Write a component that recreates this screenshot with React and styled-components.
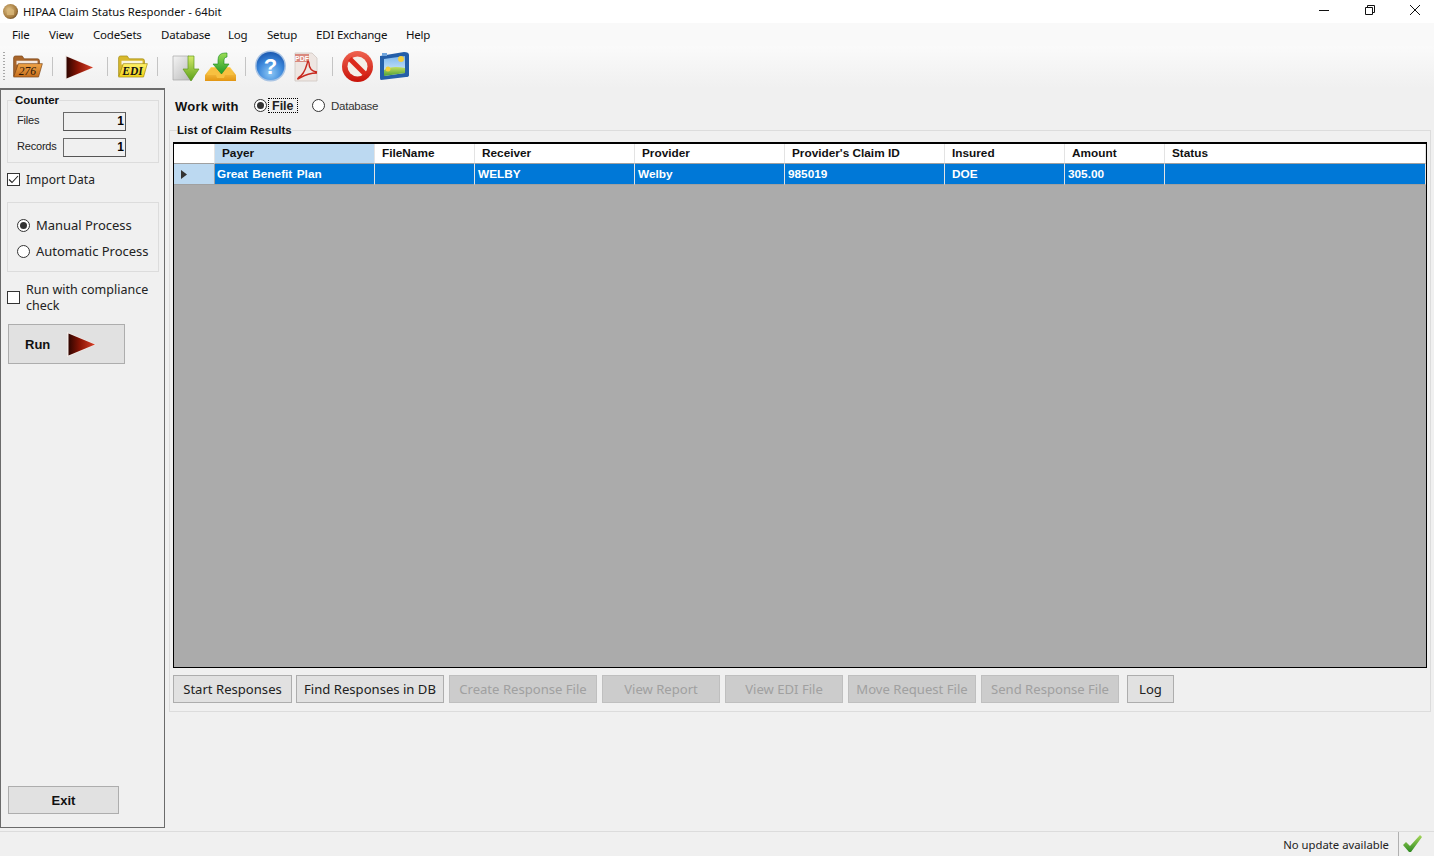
import React from "react";
import styled, { createGlobalStyle } from "styled-components";

const Global = createGlobalStyle`
  html, body { margin: 0; padding: 0; background: #f0f0f0; overflow: hidden; }
  * { box-sizing: border-box; }
`;

const UI = `"Noto Sans", "Open Sans", sans-serif`;
const MS = `"Liberation Sans", Arial, sans-serif`;

const Window = styled.div`
  width: 1434px; height: 856px; display: flex; flex-direction: column; overflow: hidden;
  background: #f0f0f0; color: #000; font-family: ${UI}; font-size: 12px;
`;
const TitleBar = styled.header`
  height: 23px; background: #fff; display: flex; align-items: center; padding-left: 3px;
`;
const TitleText = styled.span`
  margin-left: 5px; font-size: 11.3px; color: #111; white-space: nowrap;
`;
const WinControls = styled.div`
  margin-left: auto; margin-right: -4px; display: flex; align-items: center; height: 23px;
`;
const WinBtn = styled.div`
  width: 45.5px; height: 23px; display: flex; align-items: center; justify-content: center;
  svg { display: block; margin-top: -3px; }
`;
const MenuBar = styled.nav`
  height: 23px; background: #f9f9f9; display: flex; align-items: center; padding-left: 12px;
`;
const MenuItem = styled.span`
  font-size: 11.5px; letter-spacing: -0.2px; color: #111; white-space: nowrap; width: ${p => p.$w}px; margin-top: -1px;
`;
const ToolBar = styled.div`
  height: 42px; display: flex; align-items: flex-start; padding-left: 3px;
  background: linear-gradient(#fafafa, #f0f0f0);
`;
const Grip = styled.div`
  width: 2px; height: 29px; margin-top: 6px;
  background: repeating-linear-gradient(#a8a8a8 0 1px, transparent 1px 3px);
`;
const Tool = styled.div`
  margin-left: ${p => p.$ml}px; margin-top: ${p => p.$mt}px;
  svg { display: block; }
`;
const ToolSep = styled.div`
  width: 1px; height: 19px; background: #c4c4c4; margin-left: ${p => p.$ml}px; margin-top: 11px;
`;
const Body = styled.div`
  flex: 1; display: flex; align-items: flex-start; min-height: 0;
`;
const Sidebar = styled.aside`
  width: 165px; height: 740px; border: 1px solid #6b6b6b; border-top-width: 2px;
  display: flex; flex-direction: column; padding: 3px 0 13px 6px; flex: none;
`;
const Group = styled.fieldset`
  margin: 0; padding: 0; border: 1px solid #dcdcdc; width: 152px; min-width: 0;
`;
const CounterGroup = styled(Group)`
  height: 70px; padding: 0 0 0 9px;
`;
const SmallLegend = styled.legend`
  font-family: ${MS}; font-weight: 700; font-size: 11.5px; padding: 0; margin-left: -2px;
  line-height: 14px; color: #111;
`;
const CounterRow = styled.div`
  display: flex; align-items: center; height: 19px; margin-top: ${p => p.$mt}px;
`;
const CounterLabel = styled.span`
  width: 46px; font-family: ${MS}; font-size: 11px; letter-spacing: -0.2px; color: #222; margin-top: -4px;
`;
const CounterBox = styled.div`
  width: 63px; height: 19px; border: 1px solid #6a6a6a; border-color: #6a6a6a #555 #555 #6a6a6a;
  background: #f0f0f0; text-align: right; font-family: ${MS}; font-weight: 700; font-size: 12px;
  line-height: 17px; padding-right: 1px;
`;
const CheckRow = styled.label`
  display: flex; align-items: center; margin-top: ${p => p.$mt}px; height: ${p => p.$h}px;
`;
const Box = styled.span`
  width: 13px; height: 13px; border: 1px solid #333; background: #fff; flex: none;
  display: flex; align-items: center; justify-content: center; margin-right: 6px;
`;
const CheckText = styled.span`
  font-size: ${p => p.$size}px; color: #222; line-height: 16px; margin-top: 2px;
`;
const ProcessGroup = styled(Group)`
  height: 70px; margin-top: 15px; padding: 14px 0 0 9px; display: flex; flex-direction: column; gap: 10px;
`;
const RadioRow = styled.label`
  display: flex; align-items: center; height: 16px;
`;
const Radio = styled.span`
  width: 13px; height: 13px; border-radius: 50%; border: 1px solid #333; background: #fff; flex: none;
  display: flex; align-items: center; justify-content: center;
  margin-right: ${p => p.$mr}px; margin-left: ${p => p.$ml || 0}px;
  &::after { content: ""; width: 7px; height: 7px; border-radius: 50%; background: ${p => p.$on ? "#333" : "transparent"}; }
`;
const RadioText = styled.span`
  font-size: 13px; color: #222; white-space: nowrap; letter-spacing: -.03px;
`;
const RunButton = styled.button`
  width: 117px; height: 40px; margin: 11px 0 0 1px; padding: 0 0 0 16px; background: #e1e1e1;
  border: 1px solid #adadad; display: flex; align-items: center; font-family: ${MS}; font-weight: 700;
  font-size: 13px; color: #111;
  svg { margin-left: 17px; display: block; }
`;
const ExitButton = styled.button`
  width: 111px; height: 28px; margin: auto 0 0 1px; background: #e1e1e1; border: 1px solid #adadad;
  font-family: ${MS}; font-weight: 700; font-size: 13px; color: #111; padding: 0;
`;
const Main = styled.main`
  flex: 1; padding: 2px 3px 0 4px; min-width: 0;
`;
const WorkRow = styled.div`
  height: 33px; display: flex; align-items: center; padding: 0 0 2px 6px;
`;
const WorkLabel = styled.span`
  font-family: ${MS}; font-weight: 700; font-size: 13px; width: 79px; color: #111; letter-spacing: .2px; margin-top: 1px;
`;
const FocusLabel = styled.span`
  font-family: ${MS}; font-size: 12.5px; font-weight: 700; color: #222; border: 1px dotted #000;
  height: 15px; width: 30px; line-height: 14px; padding-left: 3px; margin-left: -3px;
`;
const DbLabel = styled.span`
  font-family: ${MS}; font-size: 11.5px; color: #333; letter-spacing: -.25px;
`;
const ResultGroup = styled.fieldset`
  margin: 0; border: 1px solid #dcdcdc; padding: 5px 3px 8px 3px; height: 589px; min-width: 0;
  display: flex; flex-direction: column;
`;
const ResultLegend = styled.legend`
  font-family: ${MS}; font-weight: 700; font-size: 11.5px; line-height: 14px; margin-left: 4px; padding: 0;
  color: #111; letter-spacing: .05px;
`;
const DataGrid = styled.div`
  height: 526px; background: #ababab; border: 1px solid #000; border-width: 2px 1px 1px 1px; flex: none;
`;
const Row = styled.div`
  display: grid; grid-template-columns: 41px 160px 100px 160px 150px 160px 120px 100px 1fr;
  height: ${p => p.$h}px; background: ${p => p.$bg}; font-family: ${MS}; font-weight: 700; font-size: 11.8px;
`;
const HeadCell = styled.div`
  border-right: 1px solid #e3e3e3; border-bottom: 1px solid #a0a0a0;
  background: ${p => p.$sel ? "#bcd9f1" : "#fff"}; line-height: 19px; padding-left: 7px; color: #111; white-space: nowrap;
`;
const Cell = styled.div`
  border-right: 1px solid #e3e3e3; border-bottom: 1px solid #a0a0a0; color: #fff; line-height: 20px;
  padding-left: ${p => p.$pad}px; white-space: nowrap; word-spacing: 1.2px;
`;
const RowHeader = styled.div`
  background: #bcd9f1; border-right: 1px solid #a0a0a0; border-bottom: 1px solid #a0a0a0; display: flex; align-items: center; padding-left: 7px;
`;
const Actions = styled.div`
  display: flex; margin-top: 7px; flex: none;
`;
const ActionButton = styled.button`
  width: ${p => p.$w}px; height: 28px; margin-left: ${p => p.$ml}px; padding: 0; white-space: nowrap;
  font-family: ${UI}; font-size: 13.1px;
  background: ${p => p.disabled ? "#cccccc" : "#e1e1e1"};
  border: 1px solid ${p => p.disabled ? "#bfbfbf" : "#adadad"};
  color: ${p => p.disabled ? "#a0a0a0" : "#222"};
`;
const StatusBar = styled.footer`
  height: 25px; margin-top: auto; border-top: 1px solid #dcdcdc; display: flex; justify-content: flex-end; align-items: center;
  padding-right: 12px; flex: none;
`;
const StatusText = styled.span`
  font-size: 11.3px; color: #222; margin-right: 9px;
`;
const StatusSep = styled.div`
  width: 1px; height: 24px; background: #b0b0b0; margin-right: 4px;
`;

const AppIcon = () => (
  <svg width="15" height="15" viewBox="0 0 15 15">
    <defs><radialGradient id="ai" cx=".4" cy=".4" r=".7"><stop offset="0" stopColor="#e2c58c"/><stop offset=".7" stopColor="#a67c3f"/><stop offset="1" stopColor="#5c4020"/></radialGradient></defs>
    <circle cx="7.5" cy="7.5" r="7.5" fill="url(#ai)"/>
    <path d="M4 6q3.5-3 7 0v5H4z" fill="#d8b678" opacity=".8"/>
  </svg>
);

const Folder = ({ id, back, mid, front, label, stroke, color }) => (
  <svg width="31" height="23" viewBox="0 0 31 24">
    <defs><linearGradient id={id} x1="0" y1="0" x2="0" y2="1"><stop offset="0" stopColor={mid}/><stop offset="1" stopColor={front}/></linearGradient></defs>
    <path d="M1 22V3q0-2 2-2h7l2 3h14q2 0 2 2v3H6L3 22z" fill={back} stroke={stroke} strokeWidth=".7"/>
    <path d="M4 6h22v4H4z" fill="#fff" opacity=".85"/>
    <path d="M6 9h25l-4 14H1z" fill={`url(#${id})`} stroke={stroke} strokeWidth=".7"/>
    <text x="15.5" y="21" textAnchor="middle" fontFamily="Liberation Serif, serif" fontStyle="italic" fontWeight={label === "EDI" ? 700 : 400} fontSize="12" fill={color}>{label}</text>
  </svg>
);

const PlayArrow = ({ id }) => (
  <svg width="29" height="25" viewBox="0 0 29 25">
    <defs><linearGradient id={id} x1="0" y1="0" x2="1" y2="0"><stop offset="0" stopColor="#2e0500"/><stop offset=".45" stopColor="#8c1505"/><stop offset="1" stopColor="#d8412a"/></linearGradient></defs>
    <path d="M0 0l29 12.5L0 25z" fill="#f4ece9"/>
    <path d="M1.5 1.5L28 12.5 1.5 23.500z" fill={`url(#${id})`}/>
  </svg>
);

const PageDown = () => (
  <svg width="28" height="27" viewBox="0 0 28 27">
    <defs><linearGradient id="pg" x1="0" y1="0" x2="1" y2="1"><stop offset="0" stopColor="#f4f4f4"/><stop offset="1" stopColor="#b8b8b8"/></linearGradient>
    <linearGradient id="ga" x1="0" y1="0" x2="0" y2="1"><stop offset="0" stopColor="#d4ea6a"/><stop offset="1" stopColor="#5aa018"/></linearGradient></defs>
    <path d="M1 1h16l3 3v21H1z" fill="url(#pg)" stroke="#a8a8a8" strokeWidth=".7"/>
    <path d="M16 1h6v13h5L19 26 11 14h5z" fill="url(#ga)" stroke="#5e9a20" strokeWidth=".7"/>
  </svg>
);

const InboxIn = () => (
  <svg width="31" height="30" viewBox="0 0 31 30">
    <defs><linearGradient id="ib" x1="0" y1="0" x2="0" y2="1"><stop offset="0" stopColor="#ffd763"/><stop offset="1" stopColor="#e29512"/></linearGradient>
    <linearGradient id="gb" x1="0" y1="0" x2="0" y2="1"><stop offset="0" stopColor="#9cdc54"/><stop offset="1" stopColor="#1f9a28"/></linearGradient></defs>
    <path d="M6 15h19l6 8v6H0v-6z" fill="url(#ib)"/>
    <path d="M6 16h19l4 7H20l-1 3h-7l-1-3H2z" fill="#f7c040"/>
    <path d="M20 1q-7 0-7 7v4H8l8.5 10L24 12h-5V8q0-3 3-3V1z" fill="url(#gb)" stroke="#178a20" strokeWidth=".6"/>
  </svg>
);

const Help = () => (
  <svg width="31" height="32" viewBox="0 0 31 32">
    <defs><radialGradient id="hp" cx=".5" cy=".75" r=".75"><stop offset="0" stopColor="#8dc8f5"/><stop offset=".6" stopColor="#3a86da"/><stop offset="1" stopColor="#1b58b0"/></radialGradient></defs>
    <circle cx="15.5" cy="16" r="15.5" fill="#a9c4e4"/>
    <circle cx="15.5" cy="16" r="14" fill="url(#hp)"/>
    <text x="15.5" y="24" textAnchor="middle" fontFamily="Liberation Sans, sans-serif" fontWeight="700" fontSize="22" fill="#fff">?</text>
  </svg>
);

const Pdf = () => (
  <svg width="24" height="30" viewBox="0 0 24 30">
    <path d="M1 1h17l5 5v23H1z" fill="#eee6e2" stroke="#cfc7c2" strokeWidth=".8"/>
    <rect x="1" y="2" width="14" height="8" fill="#d9897f"/>
    <text x="8" y="9" textAnchor="middle" fontFamily="Liberation Sans, sans-serif" fontWeight="700" fontSize="7" fill="#fff">PDF</text>
    <path d="M4 26q6-3 9-14 1-5 2-1 0 8 8 9M4 26q-1 2 2 0 8-5 17-5" fill="none" stroke="#c8281e" strokeWidth="1.4"/>
  </svg>
);

const Stop = () => (
  <svg width="31" height="31" viewBox="0 0 31 31">
    <defs><linearGradient id="st" x1="0" y1="0" x2="0" y2="1"><stop offset="0" stopColor="#ef6350"/><stop offset="1" stopColor="#c81208"/></linearGradient></defs>
    <circle cx="15.5" cy="15.5" r="15.5" fill="url(#st)"/>
    <circle cx="15.5" cy="15.5" r="10" fill="#f4efe8"/>
    <path d="M6 9.5L21.5 25 25 21.5 9.5 6z" fill="#dc2a1c"/>
  </svg>
);

const Picture = () => (
  <svg width="31" height="30" viewBox="0 0 31 30">
    <defs><linearGradient id="sk" x1="0" y1="0" x2="0" y2="1"><stop offset="0" stopColor="#7eb8ee"/><stop offset="1" stopColor="#dff0fb"/></linearGradient>
    <linearGradient id="gr" x1="0" y1="0" x2="0" y2="1"><stop offset="0" stopColor="#c4e060"/><stop offset="1" stopColor="#4ea038"/></linearGradient></defs>
    <path d="M1 5l24-4q5 0 5 3v20q0 2-3 2L2 29q-1 0-1-2z" fill="#245ea8"/>
    <path d="M5 8l21-3v17L5 25z" fill="url(#sk)"/>
    <path d="M5 19q8-5 21-2v5L5 25z" fill="url(#gr)"/>
    <circle cx="22" cy="8" r="3" fill="#f4cf3c"/>
    <circle cx="9" cy="18" r="2.5" fill="#f4cf3c"/>
    <rect x="3" y="2" width="5" height="3" fill="#6fa4dc"/>
  </svg>
);

const CheckMark = () => (
  <svg width="19" height="18" viewBox="0 0 19 18">
    <defs><linearGradient id="ck" x1="0" y1="0" x2="0" y2="1"><stop offset="0" stopColor="#a6d85a"/><stop offset="1" stopColor="#2f8a22"/></linearGradient></defs>
    <path d="M0 10l3-3 4 4L17 0l2 2L8 17H6z" fill="url(#ck)"/>
  </svg>
);

const Arrow = () => (
  <svg width="7" height="9" viewBox="0 0 7 9"><path d="M0 0l6 4.5L0 9z" fill="#333"/></svg>
);

const columns = ["Payer", "FileName", "Receiver", "Provider", "Provider's Claim ID", "Insured", "Amount", "Status"];
const values = [["Great Benefit Plan", 2], ["", 3], ["WELBY", 3], ["Welby", 3], ["985019", 3], ["DOE", 7], ["305.00", 3], ["", 3]];
const menus = [["File", 37], ["View", 44], ["CodeSets", 68], ["Database", 67], ["Log", 39], ["Setup", 49], ["EDI Exchange", 90], ["Help", 30]];
const actions = [
  ["Start Responses", 119, 0, false], ["Find Responses in DB", 148, 4, false], ["Create Response File", 148, 5, true],
  ["View Report", 118, 5, true], ["View EDI File", 118, 5, true], ["Move Request File", 128, 5, true],
  ["Send Response File", 138, 5, true], ["Log", 47, 8, false],
];

export default function App() {
  return (
    <Window>
      <Global />
      <TitleBar>
        <AppIcon />
        <TitleText>HIPAA Claim Status Responder - 64bit</TitleText>
        <WinControls>
          <WinBtn><svg width="10" height="10" viewBox="0 0 10 10"><path d="M0 5.5h10" stroke="#111"/></svg></WinBtn>
          <WinBtn><svg width="10" height="10" viewBox="0 0 10 10" fill="none" stroke="#111"><path d="M.5 2.5h7v7h-7zM2.5 2.5v-2h7v7h-2"/></svg></WinBtn>
          <WinBtn><svg width="10" height="10" viewBox="0 0 10 10" stroke="#111"><path d="M0 0l10 10M10 0L0 10"/></svg></WinBtn>
        </WinControls>
      </TitleBar>
      <MenuBar>
        {menus.map(([m, w]) => <MenuItem key={m} $w={w}>{m}</MenuItem>)}
      </MenuBar>
      <ToolBar>
        <Grip />
        <Tool $ml={7} $mt={9}><Folder id="f1" back="#a8652a" mid="#f0a548" front="#c56d1c" stroke="#7a4416" label="276" color="#2a1608" /></Tool>
        <ToolSep $ml={9} />
        <Tool $ml={12} $mt={9}><PlayArrow id="p1" /></Tool>
        <ToolSep $ml={13} />
        <Tool $ml={9} $mt={9}><Folder id="f2" back="#d8b82c" mid="#fff26a" front="#f0d018" stroke="#a08a10" label="EDI" color="#111" /></Tool>
        <ToolSep $ml={9} />
        <Tool $ml={14} $mt={9}><PageDown /></Tool>
        <Tool $ml={5} $mt={6}><InboxIn /></Tool>
        <ToolSep $ml={9} />
        <Tool $ml={9} $mt={4}><Help /></Tool>
        <Tool $ml={8} $mt={6}><Pdf /></Tool>
        <ToolSep $ml={14} />
        <Tool $ml={9} $mt={5}><Stop /></Tool>
        <Tool $ml={6} $mt={5}><Picture /></Tool>
      </ToolBar>
      <Body>
        <Sidebar>
          <CounterGroup>
            <SmallLegend>Counter</SmallLegend>
            <CounterRow $mt={5}><CounterLabel>Files</CounterLabel><CounterBox>1</CounterBox></CounterRow>
            <CounterRow $mt={7}><CounterLabel>Records</CounterLabel><CounterBox>1</CounterBox></CounterRow>
          </CounterGroup>
          <CheckRow $mt={8} $h={16}>
            <Box><svg width="11" height="9" viewBox="0 0 11 9"><path d="M1 4.5l3 3L10 1" fill="none" stroke="#222" strokeWidth="1.1"/></svg></Box>
            <CheckText $size={12}>Import Data</CheckText>
          </CheckRow>
          <ProcessGroup as="div">
            <RadioRow><Radio $on $mr={6} /><RadioText>Manual Process</RadioText></RadioRow>
            <RadioRow><Radio $mr={6} /><RadioText>Automatic Process</RadioText></RadioRow>
          </ProcessGroup>
          <CheckRow $mt={9} $h={32}>
            <Box />
            <CheckText $size={12.5}>Run with compliance<br />check</CheckText>
          </CheckRow>
          <RunButton>Run<PlayArrow id="p2" /></RunButton>
          <ExitButton>Exit</ExitButton>
        </Sidebar>
        <Main>
          <WorkRow>
            <WorkLabel>Work with</WorkLabel>
            <Radio $on $mr={4} />
            <FocusLabel>File</FocusLabel>
            <Radio $mr={6} $ml={14} />
            <DbLabel>Database</DbLabel>
          </WorkRow>
          <ResultGroup>
            <ResultLegend>List of Claim Results</ResultLegend>
            <DataGrid>
              <Row $h={20} $bg="#fff">
                <HeadCell />
                {columns.map((c, i) => <HeadCell key={c} $sel={i === 0}>{c}</HeadCell>)}
              </Row>
              <Row $h={21} $bg="#0078d7">
                <RowHeader><Arrow /></RowHeader>
                {values.map(([v, pad], i) => <Cell key={i} $pad={pad}>{v}</Cell>)}
              </Row>
            </DataGrid>
            <Actions>
              {actions.map(([t, w, ml, d]) => <ActionButton key={t} $w={w} $ml={ml} disabled={d}>{t}</ActionButton>)}
            </Actions>
          </ResultGroup>
        </Main>
      </Body>
      <StatusBar>
        <StatusText>No update available</StatusText>
        <StatusSep />
        <CheckMark />
      </StatusBar>
    </Window>
  );
}
